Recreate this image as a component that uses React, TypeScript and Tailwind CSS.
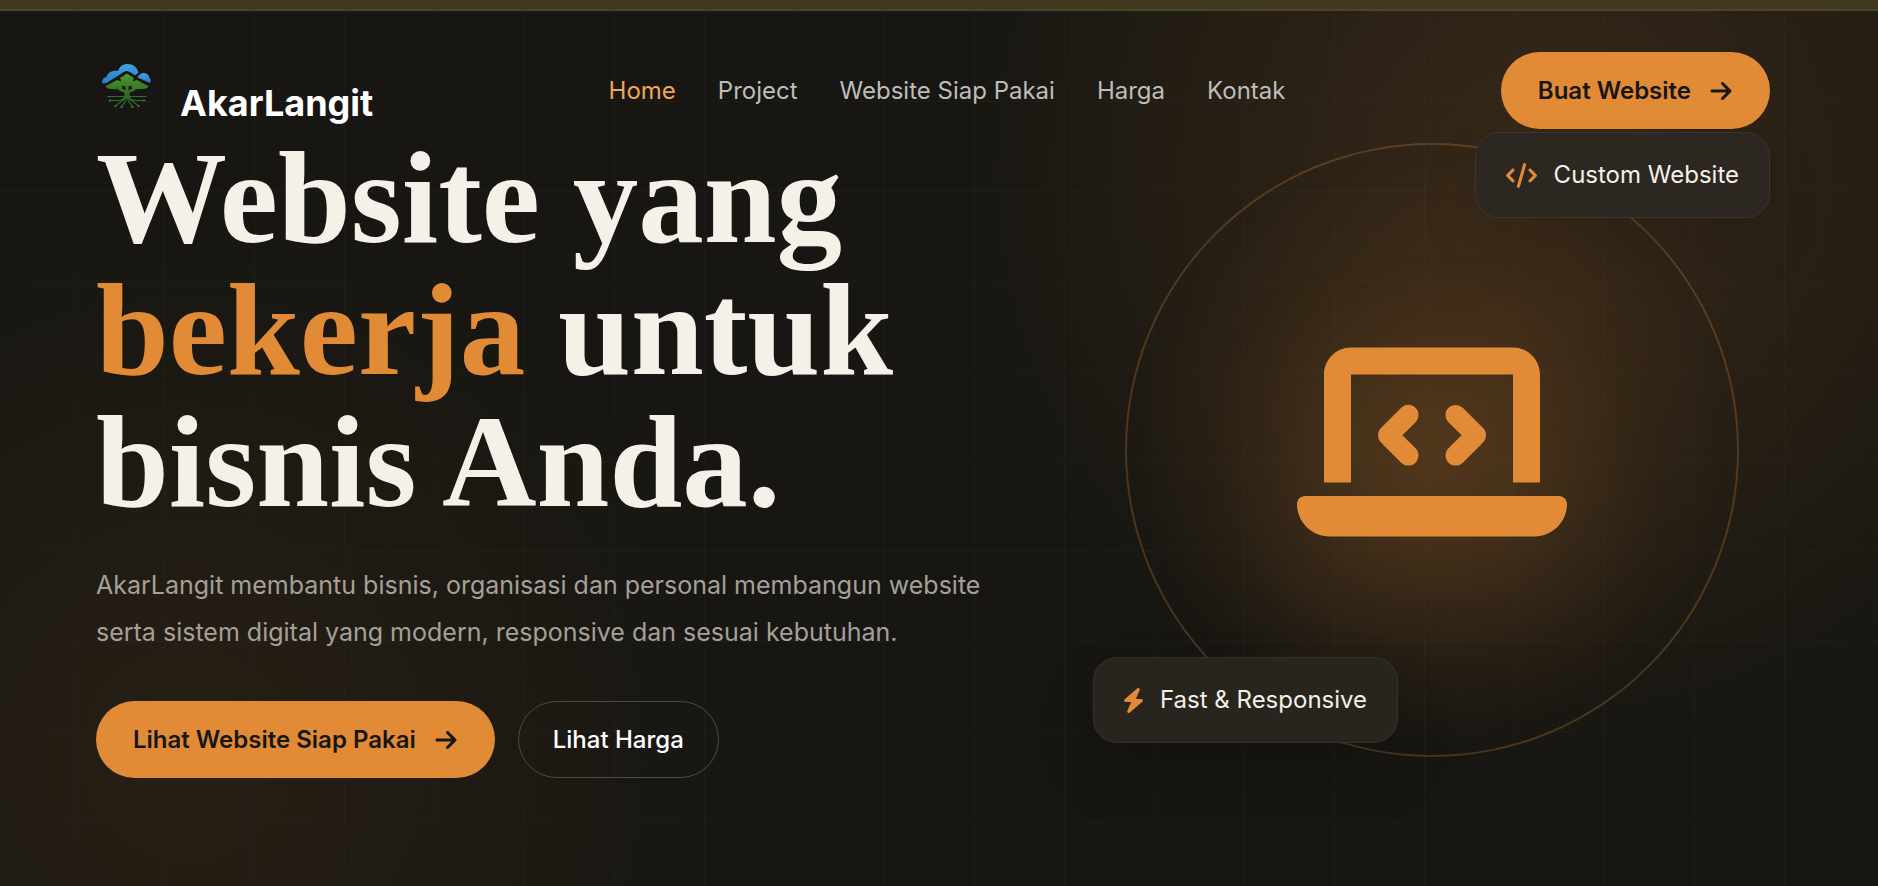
import { FaArrowRight, FaCode, FaLaptopCode } from 'react-icons/fa6'

const NAV_LINKS = [
  { label: 'Home', href: '#home', active: true },
  { label: 'Project', href: '#project' },
  { label: 'Website Siap Pakai', href: '#template' },
  { label: 'Harga', href: '#harga' },
  { label: 'Kontak', href: '#kontak' },
]

function Logo() {
  return (
    <svg viewBox="0 0 60 54" className="w-[60px] h-[54px] mt-[3px]" aria-hidden="true">
      <defs>
        <linearGradient id="sky" x1="0" y1="0" x2="0" y2="1">
          <stop offset="0" stopColor="#3fa3e0" />
          <stop offset="1" stopColor="#2779d0" />
        </linearGradient>
        <linearGradient id="leaf" x1="0" y1="0" x2="0" y2="1">
          <stop offset="0" stopColor="#4f9a2c" />
          <stop offset="1" stopColor="#2c6422" />
        </linearGradient>
      </defs>
      {/* Cloud */}
      <path
        fill="url(#sky)"
        d="M6.500 25.500C5.500 22 7.500 19.500 10.500 19 11.500 15 16 12 22 13 23.500 8.500 27 6 31.500 6c5.500 0 9.500 3 11 8.500L39 17.500c-3-2-5-4-8-4.500-3 0-5.500 2.500-8.500 4.500-4 2.500-8 5-12 7.500z"
      />
      <path fill="url(#sky)" d="M41.500 19.500c1.500-3 4-4.500 6-4.500 3.500 0 5.500 2 6 5 1.500 1 1.500 3 .5 5z" />
      {/* Crown and trunk */}
      <path
        fill="url(#leaf)"
        fillRule="evenodd"
        d="M31 15.500l7 4.500-1.500 3.500 4.500-1.500 12 6.500c-2 1-3 2.500-6 2.500-3 0-4 .5-7 0-1 2-3 2.500-5 3l-1.500 1 .5 4.500h-6l.5-4.500-1.500-1c-2-.5-4-1-5-3-3 .5-4 0-7 0-3 0-4-1.500-6-2.500l12-6.500 4.500 1.500L24 20zM26.500 27.500l-.5 3 3.500 2v-4zM35.500 27.500l-3 1v4l3.500-2z"
      />
      {/* Roots */}
      <g fill="none" stroke="#30702a" strokeWidth="1.100">
        <path d="M11.500 38.500h39M29 39c-2 3-5 3.500-8 3.500h-6M33 39c2 3 5 3.500 8 3.500h6M29.500 39c-1 4-6 4-9.500 9M32.500 39c1 4 6 4 9.500 9M30.500 39c0 4-2 6-5 9.500M31.500 39c0 4 2 6 5 9.500" />
      </g>
      <g fill="#30702a">
        <circle cx="14" cy="42.500" r="1.300" />
        <circle cx="48" cy="42.500" r="1.300" />
        <circle cx="19.500" cy="48" r="1.300" />
        <circle cx="42.500" cy="48" r="1.300" />
        <circle cx="25.500" cy="49" r="1.300" />
        <circle cx="36.500" cy="49" r="1.300" />
      </g>
    </svg>
  )
}

function BoltIcon() {
  return (
    <svg viewBox="0 0 384 512" className="w-[19px] h-[25px]" fill="#e28b36" aria-hidden="true">
      <path d="M240.500 224H352c13.300 0 25.300 8.300 29.100 20.700 5.500 12.500 2 26.600-8 35.400l-256 224c-11.300 9.800-27.800 10.600-39.900 1.800-12.100-8.800-16.500-24.800-10.600-38.500L143.500 288H32c-13.300 0-25.300-8.300-30-20.700-4.600-12.500-1.100-26.600 8.900-35.400l256-224c11.300-9.800 27.800-10.600 39.900-1.800 12.100 8.800 16.500 24.800 10.600 38.500z" />
    </svg>
  )
}

export default function App() {
  return (
    <div className="min-h-screen flex flex-col bg-[#171612] font-['Inter',sans-serif] text-[#f5f0e8]">
      <div className="h-[11px] bg-[#423920] border-b-2 border-[#4b442c]"></div>

      <div className="flex-1 bg-[linear-gradient(rgba(255,255,255,0.018)_1px,transparent_1px),linear-gradient(90deg,rgba(255,255,255,0.018)_1px,transparent_1px),radial-gradient(circle_at_82%_18%,rgba(226,138,54,0.16),transparent_35%),radial-gradient(circle_at_10%_85%,rgba(226,138,54,0.08),transparent_30%)] bg-[length:90px_90px,90px_90px,100%_100%,100%_100%] bg-[position:-16px_0px,-16px_0px,0px_0px,0px_0px]">
        <header className="flex items-center justify-between pl-24 pr-[108px] pt-[41px] pb-[3px]">
          <a href="#home" className="flex items-start gap-6 w-[410px]">
            <Logo />
            <span className="text-[36px] leading-[48px] font-bold text-white pt-6">AkarLangit</span>
          </a>

          <nav className="flex items-center gap-[42px] text-[24px]">
            {NAV_LINKS.map((link) => (
              <a key={link.label} href={link.href} className={link.active ? 'text-[#f0a557]' : 'text-[#bebdbb]'}>
                {link.label}
              </a>
            ))}
          </nav>

          <div className="w-[382px] flex justify-end">
            <button className="flex items-center gap-[18px] h-[77px] px-[37px] rounded-full bg-[#e28b36] text-[#171612] text-[24px] font-semibold">
              Buat Website
              <FaArrowRight className="size-6" />
            </button>
          </div>
        </header>

        <main className="grid grid-cols-[1fr_677px] gap-10 pl-24 pr-[108px]">
          <section>
            <h1 className="font-['Liberation_Serif',serif] font-bold text-[131px] leading-[132px]">
              Website yang
              <br />
              <span className="text-[#e28b36]">bekerja</span> untuk
              <br />
              bisnis Anda.
            </h1>
            <p className="mt-[34px] text-[25px] leading-[47px] text-[#a5a099]">
              AkarLangit membantu bisnis, organisasi dan personal membangun website
              <br />
              serta sistem digital yang modern, responsive dan sesuai kebutuhan.
            </p>
            <div className="mt-[45px] flex gap-[23px]">
              <button className="flex items-center gap-[18px] h-[77px] px-[37px] rounded-full bg-[#e28b36] text-[#171612] text-[24px] font-semibold">
                Lihat Website Siap Pakai
                <FaArrowRight className="size-6" />
              </button>
              <button className="h-[77px] px-[34px] rounded-full border border-[#4b4a47] text-white text-[24px] font-medium">
                Lihat Harga
              </button>
            </div>
          </section>

          <section className="relative h-[636px] flex items-center justify-center">
            {/* Ring with glow */}
            <div className="w-[614px] aspect-square rounded-full border-2 border-[#e28b36]/25 bg-[radial-gradient(circle,rgba(226,138,54,0.17),transparent_70%)] flex items-center justify-center pb-4">
              <FaLaptopCode className="w-[270px] h-[216px] text-[#e28b36] drop-shadow-[0_30px_60px_rgba(226,138,54,0.2)]" />
            </div>

            {/* Floating badges */}
            <div className="absolute top-0 right-0 h-[86px] px-[30px] flex items-center gap-[17px] rounded-3xl border border-[#3a362f] bg-[#2c2721] text-[24px] shadow-[0_30px_60px_rgba(0,0,0,0.1)]">
              <FaCode className="w-[31px] h-[25px] text-[#e28b36]" />
              Custom Website
            </div>
            <div className="absolute bottom-[25px] left-0 h-[86px] px-[30px] flex items-center gap-[17px] rounded-3xl border border-[#35322c] bg-[#28251f] text-[24px] shadow-[0_30px_60px_rgba(0,0,0,0.15)]">
              <BoltIcon />
              Fast &amp; Responsive
            </div>
          </section>
        </main>
      </div>
    </div>
  )
}
